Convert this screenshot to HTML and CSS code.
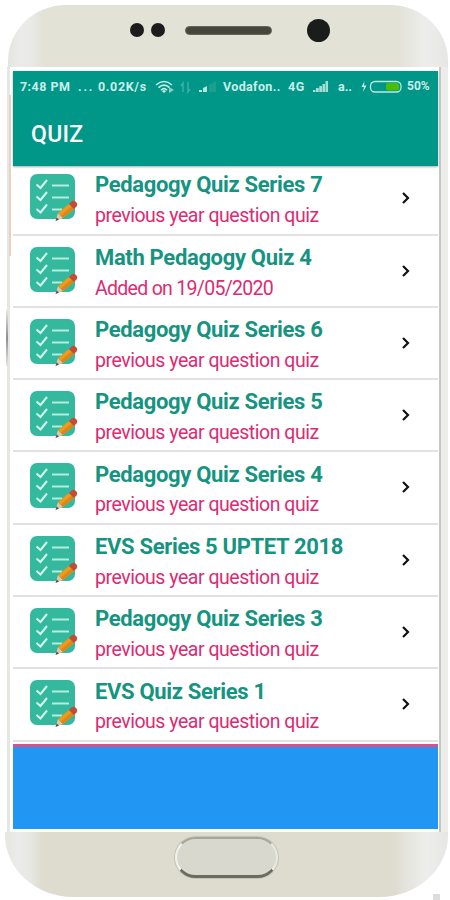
FILE: index.html
```
<!DOCTYPE html>
<html lang="en">
<head>
<meta charset="utf-8">
<title>Quiz</title>
<link rel="stylesheet" href="styles.css">
</head>
<body>
<svg class="defs" aria-hidden="true">
  <symbol id="list-icon" viewBox="0 0 48 50">
    <rect x="0" y="0" width="45" height="45" rx="7" fill="#34b99f"/>
    <path d="M6.5 10.500l4 3.500 6.500-8M6.500 22.500l4 3.500 6.500-8M6.500 35l4 3.500 6.500-8" fill="none" stroke="#d2f6ed" stroke-width="2"/>
    <path d="M22 11.500h17M22 23.500h17M22 35.500h10" fill="none" stroke="#b4ecde" stroke-width="2"/>
    <path d="M25.500 47l2.500-8 5 5z" fill="#dcc6ad"/>
    <path d="M25.500 47l1-3.500 2.500 2z" fill="#55534f"/>
    <path d="M28 39l11-9 5 5-11 9z" fill="#f09a1c"/>
    <path d="M31 41.500l10.500-9 2.500 2.500-11 9z" fill="#df861b"/>
    <path d="M39 30l3-3q2-1 4 1t.5 4.500l-2.500 2.500z" fill="#c64b36"/>
  </symbol>
  <symbol id="chevron" viewBox="0 0 10 14"><path d="M2 2l5 5-5 5" fill="none" stroke="#111" stroke-width="2.200"/></symbol>
</svg>
<div class="phone">
  <div class="bezel-top">
    <i class="sensor"></i><i class="sensor second"></i><i class="speaker"></i><i class="camera"></i>
  </div>
  <div class="display">
    <header class="appbar">
      <div class="status">
        <span class="time">7:48 PM</span><span class="dots">...</span><span class="speed">0.02K/s</span>
        <svg class="signals" viewBox="0 0 64 16">
          <g fill="none" stroke="#c5f0e9" stroke-width="1.600"><path d="M1 6q8-7 16 0M3.500 8.700q5.500-5 11 0M6 11.200q3-3 6 0"/></g>
          <path d="M9 14l-2-2q2-1.500 4 0z" fill="#d8f6f1"/><path d="M14 8l5 3-5 3z" fill="#8bd0c5"/>
          <path d="M28 13V4l-2 3M33 3v10l2-3" fill="none" stroke="#45b3a5" stroke-width="1.300"/>
          <path d="M44 13v-2h3v2zM48 13V9l4-2v6z" fill="#b5e4dd"/><path d="M54 13V6l7-4v11z" fill="#1a9f90"/>
        </svg>
        <span class="carrier">Vodafon..</span><span class="net">4G</span>
        <svg class="bars" viewBox="0 0 16 12"><path d="M0 11V9h2.500v2zM3 11V7h2.800v4zM6.300 11V5h2.700v6zM9.500 11V3h2.500v8zM12.500 11V0H15v11z" fill="#a5ded6"/></svg>
        <span class="carrier-two">a..</span>
        <svg class="battery" viewBox="0 0 41 14"><path d="M3.500 1L0.500 7h2.500L2 12 5.500 5.500H3z" fill="#c8efe9"/><rect x="9.500" y="1.500" width="30.500" height="10.500" rx="4.500" fill="none" stroke="#b9e9e3" stroke-width="1.300"/><rect x="25" y="3" width="13" height="7.500" rx="2" fill="#49bd08"/></svg>
        <span class="percent">50%</span>
      </div>
      <h1>QUIZ</h1>
    </header>
    <ul class="list">
      <li><svg class="icon"><use href="#list-icon"/></svg><div class="text"><h2>Pedagogy Quiz Series 7</h2><p>previous year question quiz</p></div><svg class="arrow"><use href="#chevron"/></svg></li>
      <li><svg class="icon"><use href="#list-icon"/></svg><div class="text"><h2>Math Pedagogy Quiz 4</h2><p class="date">Added on 19/05/2020</p></div><svg class="arrow"><use href="#chevron"/></svg></li>
      <li><svg class="icon"><use href="#list-icon"/></svg><div class="text"><h2>Pedagogy Quiz Series 6</h2><p>previous year question quiz</p></div><svg class="arrow"><use href="#chevron"/></svg></li>
      <li><svg class="icon"><use href="#list-icon"/></svg><div class="text"><h2>Pedagogy Quiz Series 5</h2><p>previous year question quiz</p></div><svg class="arrow"><use href="#chevron"/></svg></li>
      <li><svg class="icon"><use href="#list-icon"/></svg><div class="text"><h2>Pedagogy Quiz Series 4</h2><p>previous year question quiz</p></div><svg class="arrow"><use href="#chevron"/></svg></li>
      <li><svg class="icon"><use href="#list-icon"/></svg><div class="text"><h2>EVS Series 5 UPTET 2018</h2><p>previous year question quiz</p></div><svg class="arrow"><use href="#chevron"/></svg></li>
      <li><svg class="icon"><use href="#list-icon"/></svg><div class="text"><h2>Pedagogy Quiz Series 3</h2><p>previous year question quiz</p></div><svg class="arrow"><use href="#chevron"/></svg></li>
      <li><svg class="icon"><use href="#list-icon"/></svg><div class="text"><h2>EVS Quiz Series 1</h2><p>previous year question quiz</p></div><svg class="arrow"><use href="#chevron"/></svg></li>
    </ul>
    <div class="banner"></div>
  </div>
  <div class="bezel-bottom"><div class="home"></div></div>
  <i class="edge-tint"></i><i class="side-key"></i><i class="corner-mark"></i>
</div>
</body>
</html>
```

FILE: styles.css
```
* { box-sizing: border-box; }
body { margin: 0; background: #fff; font-family: Roboto, "Liberation Sans", sans-serif; overflow: hidden; }
.defs { position: absolute; width: 0; height: 0; }
.phone { position: relative; width: 450px; height: 900px; padding-top: 5px; }
.bezel-top {
  display: flex; align-items: center; height: 62px; margin: 0 2px 0 8px; padding: 0 0 12px 122px;
  border-radius: 58px 58px 0 0 / 56px 56px 0 0;
  background: linear-gradient(90deg, #e4e4e0 0, #ebebea 12px, #e9e9e6 24px, #e2e2d7 36px, #e2e2d7 390px, #e6e6e0 400px, #ededeb 418px, #e6e6e3 440px);
}
.sensor { width: 14px; height: 14px; border-radius: 50%; background: #1c1c1d; }
.sensor.second { margin-left: 7px; }
.speaker { width: 87px; height: 9px; margin-left: 20px; border-radius: 5px; background: #46463f; border: 1px solid #66665b; }
.camera { width: 23px; height: 23px; margin-left: 35px; border-radius: 50%; background: #1b1d1a; }
.display {
  height: 765px; margin: 0 2px 0 7px; padding: 4px 3px 3px 3px;
  border-left: 3px solid #e6e6e3; border-right: 7px solid #ececea; background: #fff;
  box-shadow: inset -2px 0 #c6c8c3;
}
.appbar { height: 95px; background: #009688; color: #fff; position: relative; box-shadow: 0 1px 2px #aaa; }
.status { display: flex; align-items: center; height: 31px; padding-left: 7px; font-size: 12.500px; font-weight: 700; line-height: 15px; color: #c8efe9; white-space: nowrap; }
.status > * { flex: none; }
.time { width: 58px; letter-spacing: .45px; }
.dots { width: 20px; letter-spacing: 1.800px; }
.speed { width: 57px; letter-spacing: .65px; }
.signals { width: 64px; height: 16px; margin-right: 4px; }
.carrier { width: 65px; letter-spacing: .35px; }
.net { width: 25px; letter-spacing: .5px; }
.bars { width: 16px; height: 12px; margin-right: 9px; }
.carrier-two { width: 23px; }
.battery { width: 41px; height: 14px; margin-right: 5px; }
.percent { font-size: 12px; }
h1 { margin: 19px 0 0 18px; font-size: 23px; line-height: 28px; font-weight: 500; letter-spacing: .3px; }
.list { margin: 0; padding: 0; height: 578px; overflow: hidden; list-style: none; }
.list li { display: flex; height: 72.300px; padding: 11px 0 0 17px; border-bottom: 2px solid #e1e1e1; }
.list li:first-child { height: 69.500px; padding-top: 8px; }
.icon { width: 48px; height: 50px; flex: none; }
.text { width: 306px; margin: -.7px 0 0 17px; white-space: nowrap; }
h2 { margin: 0; font-size: 22px; line-height: 24px; font-weight: 700; letter-spacing: -.33px; color: #159481; }
p { margin: 4.700px 0 0; font-size: 19.500px; line-height: 27px; letter-spacing: -.47px; color: #dc2b72; }
.date { letter-spacing: -.7px; }
.arrow { width: 10px; height: 14px; flex: none; margin-top: 17px; }
.banner { height: 85px; background: #2196f3; border-top: 3px solid #d3538b; }
.bezel-bottom {
  display: flex; justify-content: center; height: 65px; margin: 0 2px 0 5px; padding: 5px 0 0;
  border-radius: 0 0 68px 68px / 0 0 62px 62px;
  background: linear-gradient(90deg, #e6e6e2 0, #ebebea 14px, #e7e7e3 26px, #dddccf 38px, #dddccf 390px, #e4e4dd 400px, #ededeb 422px, #e6e6e3 443px);
}
.home { width: 103px; height: 41px; border: 2px solid #a6a69c; border-left-color: #f1f1ee; border-right-color: #e9e9e3; border-bottom: 3px solid #6c6c5e; border-radius: 21px; background: #d8d8cf; box-shadow: 0 0 0 1px #c4c4b9; }
.edge-tint { position: absolute; left: 9px; top: 95px; width: 2px; height: 161px; background: #edcfca; }
.side-key { position: absolute; left: 6px; top: 310px; width: 2px; height: 56px; background: linear-gradient(#e6e6e3, #8d8e91, #e6e6e3); }
.corner-mark { position: absolute; left: 433px; top: 894px; width: 7px; height: 6px; background: #ddd; }
```
